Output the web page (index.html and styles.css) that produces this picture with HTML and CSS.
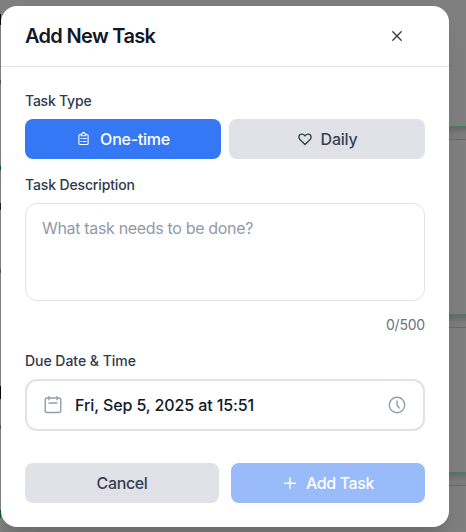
FILE: index.html
```html
<!DOCTYPE html>
<html lang="en">
<head>
<meta charset="utf-8">
<title>Add New Task</title>
<link rel="stylesheet" href="styles.css">
</head>
<body>
<div class="page" aria-hidden="true"><div class="edge"></div><div class="card first"></div><div class="card second"></div><div class="card third"></div><div class="card fourth"></div></div>
<main class="modal">
  <header class="header">
    <h1 class="title">Add New Task</h1>
    <button class="close" aria-label="Close"><svg width="16" height="16" viewBox="0 0 16 16"><path d="M3.8 3.8l8.4 8.4M12.2 3.8l-8.4 8.4"/></svg></button>
  </header>
  <form class="form">
    <div class="label type-label">Task Type</div>
    <div class="types">
      <button type="button" class="button primary"><svg class="clip" width="16" height="16" viewBox="0 0 16 16"><path d="M5 3.500H4Q2.900 3.500 2.900 4.600v7.800q0 1.100 1.100 1.100h7q1.100 0 1.100-1.100V4.600q0-1.100-1.100-1.100h-1M5.300 4.700V3.400q0-.7.7-.7.4-1.100 1.500-1.100T9 2.700q.7 0 .7.7v1.300zM5 7.500h.8M7.300 7.500h2.900M5 10.500h.8M7.300 10.500h2.900"/></svg><span>One-time</span></button>
      <button type="button" class="button"><svg class="heart" width="16" height="16" viewBox="0 0 16 16"><path d="M8 13.500L2.900 8.500C1.500 7 1.500 5 2.700 3.900c1.500-1.300 3.900-1 5.300 1 1.400-2 3.800-2.300 5.300-1 1.200 1.100 1.200 3.100-.2 4.600z"/></svg><span>Daily</span></button>
    </div>
    <label class="label description-label" for="description">Task Description</label>
    <textarea id="description" class="description" placeholder="What task needs to be done?"></textarea>
    <div class="count">0/500</div>
    <div class="label date-label">Due Date &amp; Time</div>
    <div class="date">
      <svg width="20" height="20" viewBox="0 0 20 20"><rect x="2.200" y="3" width="15.600" height="14.500" rx="2"/><path d="M6 1.600v3.200M14 1.600v3.200M6 8h8"/></svg>
      <span class="date-text">Fri, Sep 5, 2025 at 15:51</span>
      <svg width="20" height="20" viewBox="0 0 20 20"><circle cx="10" cy="10" r="7.700"/><path d="M10 6v4l2.200 3"/></svg>
    </div>
    <div class="actions">
      <button type="button" class="button cancel">Cancel</button>
      <button type="button" class="button submit"><svg width="16" height="16" viewBox="0 0 16 16"><path d="M8 2.800v10.800M2.600 8.200h10.800"/></svg><span>Add Task</span></button>
    </div>
  </form>
</main>
</body>
</html>
```
FILE: styles.css
```css
* { box-sizing: border-box; }
body { margin: 0; width: 466px; height: 532px; overflow: hidden; background: #7f7f7f; font-family: Inter, "Liberation Sans", sans-serif; color: #303a4b; }
.page { position: absolute; inset: 0; overflow: hidden; }
.card { position: absolute; left: 0; right: -20px; border: 1px solid #4b7c5f; background: #7f7f7f; box-shadow: 0 4px 7px rgba(0,0,0,.2); }
.first { top: -30px; height: 157px; }
.second { top: 139px; height: 176px; }
.third { top: 327px; height: 146px; }
.fourth { top: 485px; height: 60px; }
.edge { position: absolute; z-index: 1; left: 0; top: 0; width: 1px; height: 532px; background: linear-gradient(#7f7f7f 14px, #08080c 14px 25px, #7f7f7f 25px 80px, #50535c 80px 84px, #7f7f7f 84px 166px, #075b19 166px 170px, #7f7f7f 170px 203px, #23252a 203px 210px, #7f7f7f 210px 269px, #50535c 269px 273px, #7f7f7f 273px 386px, #08080c 386px 399px, #7f7f7f 399px 425px, #50535c 425px 429px, #7f7f7f 429px 510px, #075b19 510px 518px, #7f7f7f 518px); }
.modal { position: relative; margin: 6px 0 0 1px; width: 448px; height: 521px; background: #fff; border-radius: 16px; box-shadow: 0 20px 25px -5px rgba(0,0,0,.1), 0 8px 10px -6px rgba(0,0,0,.1); }
.header { height: 61px; padding: 0 40px 0 24px; display: flex; align-items: center; justify-content: space-between; border-bottom: 1px solid #e1e2e8; }
.title { margin: 0; font-size: 20px; line-height: 28px; font-weight: 600; letter-spacing: -.68px; color: #111827; }
button { font: inherit; border: 0; padding: 0; }
svg { display: block; flex: none; fill: none; stroke: currentColor; stroke-width: 1.400; stroke-linecap: round; stroke-linejoin: round; }
.close { color: #374151; background: none; width: 24px; height: 24px; display: flex; align-items: center; justify-content: center; }
.form { padding: 24px 24px 0; display: flex; flex-direction: column; }
.label { font-size: 14px; font-weight: 500; line-height: 20px; margin-bottom: 8px; }
.type-label { letter-spacing: -.22px; }
.types { display: flex; gap: 8px; }
.button { flex: 1; height: 40px; border-radius: 8px; background: #e1e2e8; color: #374151; display: flex; align-items: center; justify-content: center; gap: 8px; font-size: 16px; line-height: 24px; font-weight: 500; letter-spacing: -.25px; }
.primary { background: #3478f6; color: #fff; }
.clip { stroke-width: 1.100; }
.description-label { margin-top: 16px; letter-spacing: -.14px; }
.description { display: block; resize: none; width: 100%; height: 98px; padding: 12px 16px; border: 1px solid #e1e2e8; border-radius: 12px; outline: none; font: 400 16px/24px Inter, sans-serif; letter-spacing: -.33px; }
.description::placeholder { color: #9299a7; opacity: 1; }
.count { margin-top: 14px; text-align: right; color: #6b7280; font-size: 14px; line-height: 20px; letter-spacing: -.2px; }
.date-label { margin-top: 16px; letter-spacing: -.03px; }
.date { height: 52px; border: 2px solid #e1e2e8; border-radius: 12px; padding: 0 16px; display: flex; align-items: center; color: #939caa; }
.date-text { flex: 1; margin-left: 12px; color: #111827; font-size: 16px; font-weight: 500; letter-spacing: -.1px; }
.actions { margin-top: 32px; display: flex; gap: 12px; }
.cancel, .submit { letter-spacing: -.38px; }
.submit { background: #99bbfa; color: #fff; }
```
